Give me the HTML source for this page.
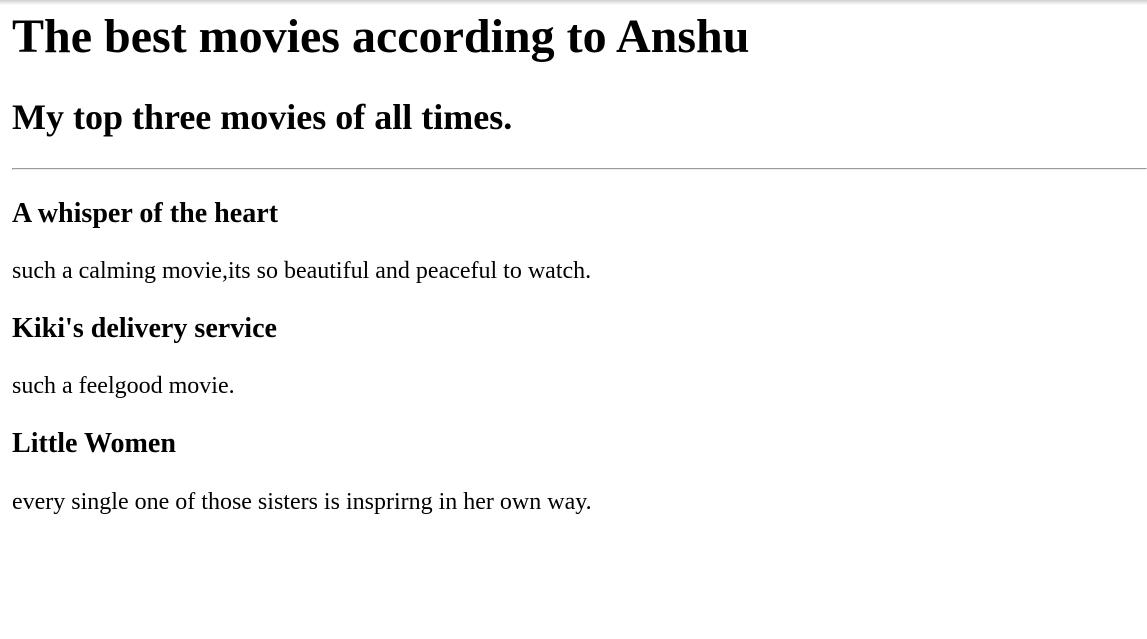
<!DOCTYPE html>
<html>
<head>
<meta charset="utf-8">
<style>
html{zoom:1.5;}
body{margin:8px;margin-top:6px;font-family:"Liberation Serif",serif;background:#fff;color:#000;}
h1{margin-top:0;}
hr{margin-right:-8px;}
.sh{position:fixed;top:0;left:0;right:0;height:3px;background:linear-gradient(#d0d0d0,#fff);}
</style>
</head>
<body>
<div class="sh"></div>
<h1>The best movies according to Anshu</h1>
<h2>My top three movies of all times.</h2>
<hr>
<h3>A whisper of the heart</h3>
<p>such a calming movie,its so beautiful and peaceful to watch.</p>
<h3>Kiki's delivery service</h3>
<p>such a feelgood movie.</p>
<h3>Little Women</h3>
<p>every single one of those sisters is insprirng in her own way.</p>
</body>
</html>
